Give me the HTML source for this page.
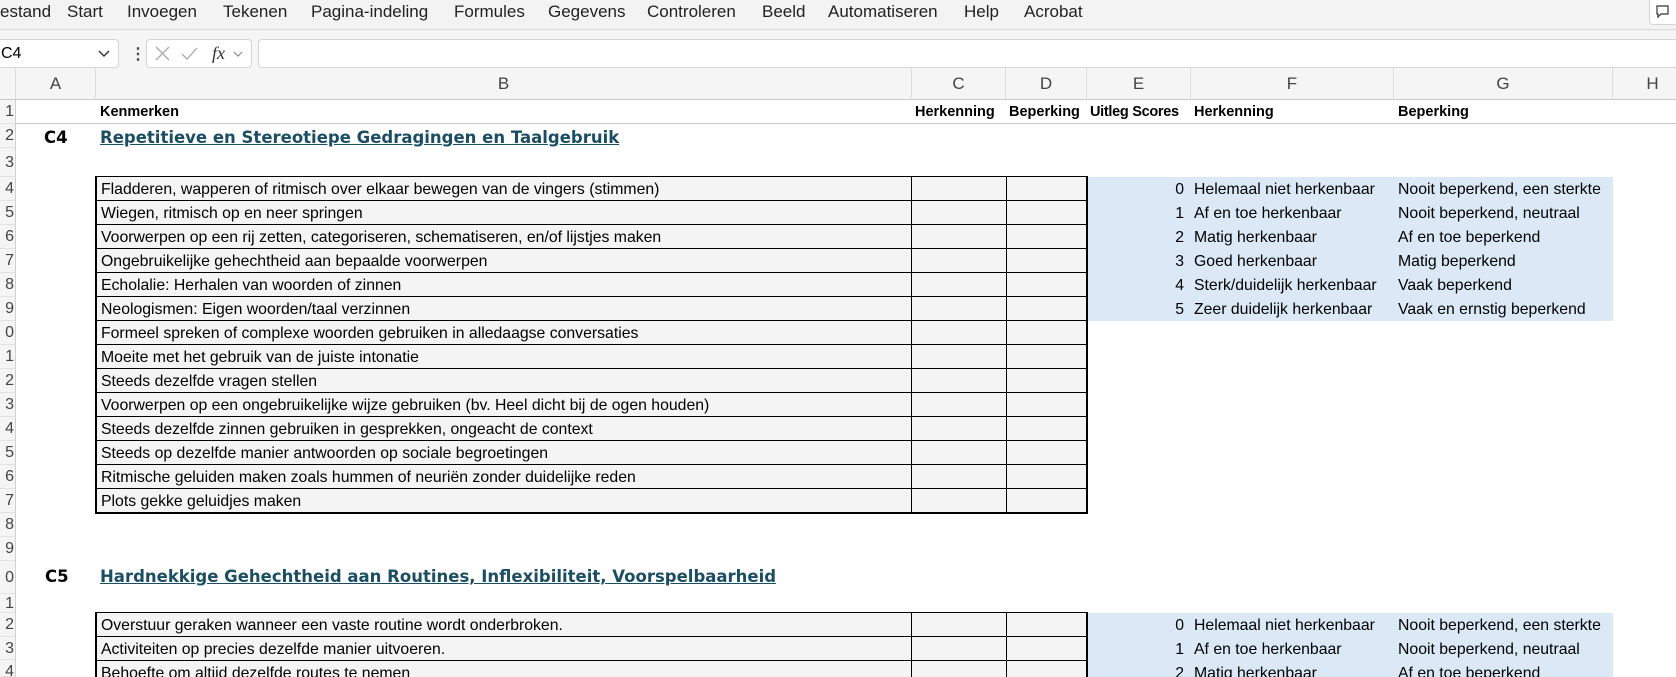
<!DOCTYPE html>
<html><head><meta charset="utf-8"><style>
*{margin:0;padding:0;box-sizing:border-box}
html,body{width:1676px;height:677px;overflow:hidden}
body{background:#fff;font-family:"Liberation Sans",sans-serif;position:relative;color:#000}
.a{position:absolute;white-space:nowrap}
.menu{left:0;top:0;width:1676px;height:30px;background:#f3f3f3;border-bottom:1px solid #dcdcdc;box-shadow:0 2px 3px rgba(0,0,0,.08)}
.menu span{position:absolute;top:2px;font-size:17px;color:#222}
.fb{left:0;top:31px;width:1676px;height:37px;background:#f5f5f5}
.box{background:#fff;border:1px solid #d4d4d4;border-radius:4px}
.ch{top:68px;height:32px;background:#f5f5f5;border-bottom:1px solid #c8c8c8;border-right:1px solid #dedede;font-size:17px;color:#444;text-align:center;line-height:32px}
.rh{left:0;width:16px;background:#f5f5f5;border-right:1px solid #d0d0d0;border-bottom:1px solid #e2e2e2;font-size:16px;color:#444;text-align:right;overflow:hidden;padding-right:1px}
.c{font-size:15.8px;height:24px;line-height:25px;padding-left:4px}
.h{font-weight:bold;font-size:14.5px;line-height:25px}
.t{font-family:"DejaVu Sans",sans-serif;font-weight:bold;font-size:16.5px;color:#1b4e63;text-decoration:underline}
.tb{background:#f4f4f4;border-bottom:1px solid #000}
.s{font-size:15.8px;line-height:25px}
</style></head><body>
<div class="a menu">
<span style="left:0">estand</span><span style="left:67px">Start</span><span style="left:127px">Invoegen</span><span style="left:223px">Tekenen</span><span style="left:311px">Pagina-indeling</span><span style="left:454px">Formules</span><span style="left:548px">Gegevens</span><span style="left:647px">Controleren</span><span style="left:762px">Beeld</span><span style="left:828px">Automatiseren</span><span style="left:964px">Help</span><span style="left:1024px">Acrobat</span>
</div>
<div class="a box" style="left:1649px;top:-4px;width:40px;height:29px;background:#fff"><svg style="position:absolute;left:6px;top:8px" width="14" height="14"><path d="M1 1h11v8H5l-3 3V9H1z" stroke="#333" fill="none" stroke-width="1.2"/></svg></div>
<div class="a fb"></div>
<div class="a box" style="left:-5px;top:39px;width:124px;height:29px;font-size:16px;line-height:27px;padding-left:5px">C4<svg style="position:absolute;right:8px;top:10px" width="12" height="8"><path d="M1 1l5 5 5-5" stroke="#333" fill="none" stroke-width="1.4"/></svg></div>
<div class="a" style="left:130px;top:44px;font-size:16px;font-weight:bold;color:#444">&#8942;</div>
<div class="a box" style="left:146px;top:39px;width:106px;height:29px">
<svg width="106" height="27"><path d="M9 7l13 13M22 7L9 20" stroke="#aaa" stroke-width="1.3"/><path d="M35 14l5 5 10-11" stroke="#aaa" stroke-width="1.3" fill="none"/><text x="65" y="19" font-family="Liberation Serif" font-style="italic" font-size="18" fill="#333">fx</text><path d="M87 12l4 4 4-4" stroke="#888" fill="none" stroke-width="1.2"/></svg></div>
<div class="a box" style="left:258px;top:39px;width:1430px;height:29px"></div>
<div class="a ch" style="left:0;width:16px"></div>
<div class="a ch" style="left:16px;width:80px">A</div>
<div class="a ch" style="left:96px;width:816px">B</div>
<div class="a ch" style="left:912px;width:94px">C</div>
<div class="a ch" style="left:1006px;width:81px">D</div>
<div class="a ch" style="left:1087px;width:104px">E</div>
<div class="a ch" style="left:1191px;width:203px">F</div>
<div class="a ch" style="left:1394px;width:219px">G</div>
<div class="a ch" style="left:1613px;width:80px">H</div>
<div class="a rh" style="top:100px;height:24px;line-height:24px">1</div>
<div class="a rh" style="top:124px;height:24px;line-height:24px">2</div>
<div class="a rh" style="top:148px;height:29px;line-height:29px">3</div>
<div class="a rh" style="top:177px;height:24px;line-height:24px">4</div>
<div class="a rh" style="top:201px;height:24px;line-height:24px">5</div>
<div class="a rh" style="top:225px;height:24px;line-height:24px">6</div>
<div class="a rh" style="top:249px;height:24px;line-height:24px">7</div>
<div class="a rh" style="top:273px;height:24px;line-height:24px">8</div>
<div class="a rh" style="top:297px;height:24px;line-height:24px">9</div>
<div class="a rh" style="top:321px;height:24px;line-height:24px">0</div>
<div class="a rh" style="top:345px;height:24px;line-height:24px">1</div>
<div class="a rh" style="top:369px;height:24px;line-height:24px">2</div>
<div class="a rh" style="top:393px;height:24px;line-height:24px">3</div>
<div class="a rh" style="top:417px;height:24px;line-height:24px">4</div>
<div class="a rh" style="top:441px;height:24px;line-height:24px">5</div>
<div class="a rh" style="top:465px;height:24px;line-height:24px">6</div>
<div class="a rh" style="top:489px;height:24px;line-height:24px">7</div>
<div class="a rh" style="top:513px;height:24px;line-height:24px">8</div>
<div class="a rh" style="top:537px;height:24px;line-height:24px">9</div>
<div class="a rh" style="top:561px;height:33px;line-height:33px">0</div>
<div class="a rh" style="top:594px;height:19px;line-height:19px">1</div>
<div class="a rh" style="top:613px;height:24px;line-height:24px">2</div>
<div class="a rh" style="top:637px;height:23px;line-height:23px">3</div>
<div class="a rh" style="top:660px;height:17px;line-height:24px">4</div>
<div class="a" style="left:16px;top:123px;width:1660px;height:1px;background:#c8c8c8"></div>
<div class="a h" style="left:100px;top:100px">Kenmerken</div>
<div class="a h" style="left:915px;top:100px">Herkenning</div>
<div class="a h" style="left:1009px;top:100px">Beperking</div>
<div class="a h" style="left:1090px;top:100px;letter-spacing:-0.3px">Uitleg Scores</div>
<div class="a h" style="left:1194px;top:100px">Herkenning</div>
<div class="a h" style="left:1398px;top:100px">Beperking</div>
<div class="a" style="left:44px;top:128px;font-family:'DejaVu Sans';font-weight:bold;font-size:16.5px">C4</div>
<div class="a t" style="left:100px;top:128px">Repetitieve en Stereotiepe Gedragingen en Taalgebruik</div>
<div class="a" style="left:1087px;top:177px;width:526px;height:144px;background:#dbe9f7"></div>
<div class="a" style="left:95px;top:176px;width:993px;height:338px;border:2px solid #000;background:#f4f4f4"></div>
<div style="position:absolute;left:97px;top:177px;width:989px">
<div class="c tb">Fladderen, wapperen of ritmisch over elkaar bewegen van de vingers (stimmen)</div>
<div class="c tb">Wiegen, ritmisch op en neer springen</div>
<div class="c tb">Voorwerpen op een rij zetten, categoriseren, schematiseren, en/of lijstjes maken</div>
<div class="c tb">Ongebruikelijke gehechtheid aan bepaalde voorwerpen</div>
<div class="c tb">Echolalie: Herhalen van woorden of zinnen</div>
<div class="c tb">Neologismen: Eigen woorden/taal verzinnen</div>
<div class="c tb">Formeel spreken of complexe woorden gebruiken in alledaagse conversaties</div>
<div class="c tb">Moeite met het gebruik van de juiste intonatie</div>
<div class="c tb">Steeds dezelfde vragen stellen</div>
<div class="c tb">Voorwerpen op een ongebruikelijke wijze gebruiken (bv. Heel dicht bij de ogen houden)</div>
<div class="c tb">Steeds dezelfde zinnen gebruiken in gesprekken, ongeacht de context</div>
<div class="c tb">Steeds op dezelfde manier antwoorden op sociale begroetingen</div>
<div class="c tb">Ritmische geluiden maken zoals hummen of neuriën zonder duidelijke reden</div>
<div class="c">Plots gekke geluidjes maken</div>
</div>
<div class="a" style="left:911px;top:176px;width:1px;height:338px;background:#000"></div>
<div class="a" style="left:1006px;top:176px;width:1px;height:338px;background:#000"></div>
<div class="s" style="position:absolute;left:1087px;top:177px;width:526px">
<div style="position:relative;height:24px"><span class="a" style="right:429px">0</span><span class="a" style="left:107px">Helemaal niet herkenbaar</span><span class="a" style="left:311px">Nooit beperkend, een sterkte</span></div>
<div style="position:relative;height:24px"><span class="a" style="right:429px">1</span><span class="a" style="left:107px">Af en toe herkenbaar</span><span class="a" style="left:311px">Nooit beperkend, neutraal</span></div>
<div style="position:relative;height:24px"><span class="a" style="right:429px">2</span><span class="a" style="left:107px">Matig herkenbaar</span><span class="a" style="left:311px">Af en toe beperkend</span></div>
<div style="position:relative;height:24px"><span class="a" style="right:429px">3</span><span class="a" style="left:107px">Goed herkenbaar</span><span class="a" style="left:311px">Matig beperkend</span></div>
<div style="position:relative;height:24px"><span class="a" style="right:429px">4</span><span class="a" style="left:107px">Sterk/duidelijk herkenbaar</span><span class="a" style="left:311px">Vaak beperkend</span></div>
<div style="position:relative;height:24px"><span class="a" style="right:429px">5</span><span class="a" style="left:107px">Zeer duidelijk herkenbaar</span><span class="a" style="left:311px">Vaak en ernstig beperkend</span></div>
</div>
<div class="a" style="left:45px;top:567px;font-family:'DejaVu Sans';font-weight:bold;font-size:16.5px">C5</div>
<div class="a t" style="left:100px;top:567px">Hardnekkige Gehechtheid aan Routines, Inflexibiliteit, Voorspelbaarheid</div>
<div class="a" style="left:1087px;top:613px;width:526px;height:64px;background:#dbe9f7"></div>
<div class="a" style="left:95px;top:612px;width:993px;height:65px;border:2px solid #000;border-bottom:none;background:#f4f4f4"></div>
<div style="position:absolute;left:97px;top:613px;width:989px;height:64px;overflow:hidden">
<div class="c tb">Overstuur geraken wanneer een vaste routine wordt onderbroken.</div>
<div class="c tb">Activiteiten op precies dezelfde manier uitvoeren.</div>
<div class="c tb">Behoefte om altijd dezelfde routes te nemen</div>
</div>
<div class="a" style="left:911px;top:612px;width:1px;height:65px;background:#000"></div>
<div class="a" style="left:1006px;top:612px;width:1px;height:65px;background:#000"></div>
<div class="s" style="position:absolute;left:1087px;top:613px;width:526px;height:64px;overflow:hidden">
<div style="position:relative;height:24px"><span class="a" style="right:429px">0</span><span class="a" style="left:107px">Helemaal niet herkenbaar</span><span class="a" style="left:311px">Nooit beperkend, een sterkte</span></div>
<div style="position:relative;height:24px"><span class="a" style="right:429px">1</span><span class="a" style="left:107px">Af en toe herkenbaar</span><span class="a" style="left:311px">Nooit beperkend, neutraal</span></div>
<div style="position:relative;height:24px"><span class="a" style="right:429px">2</span><span class="a" style="left:107px">Matig herkenbaar</span><span class="a" style="left:311px">Af en toe beperkend</span></div>
</div>
</body></html>
